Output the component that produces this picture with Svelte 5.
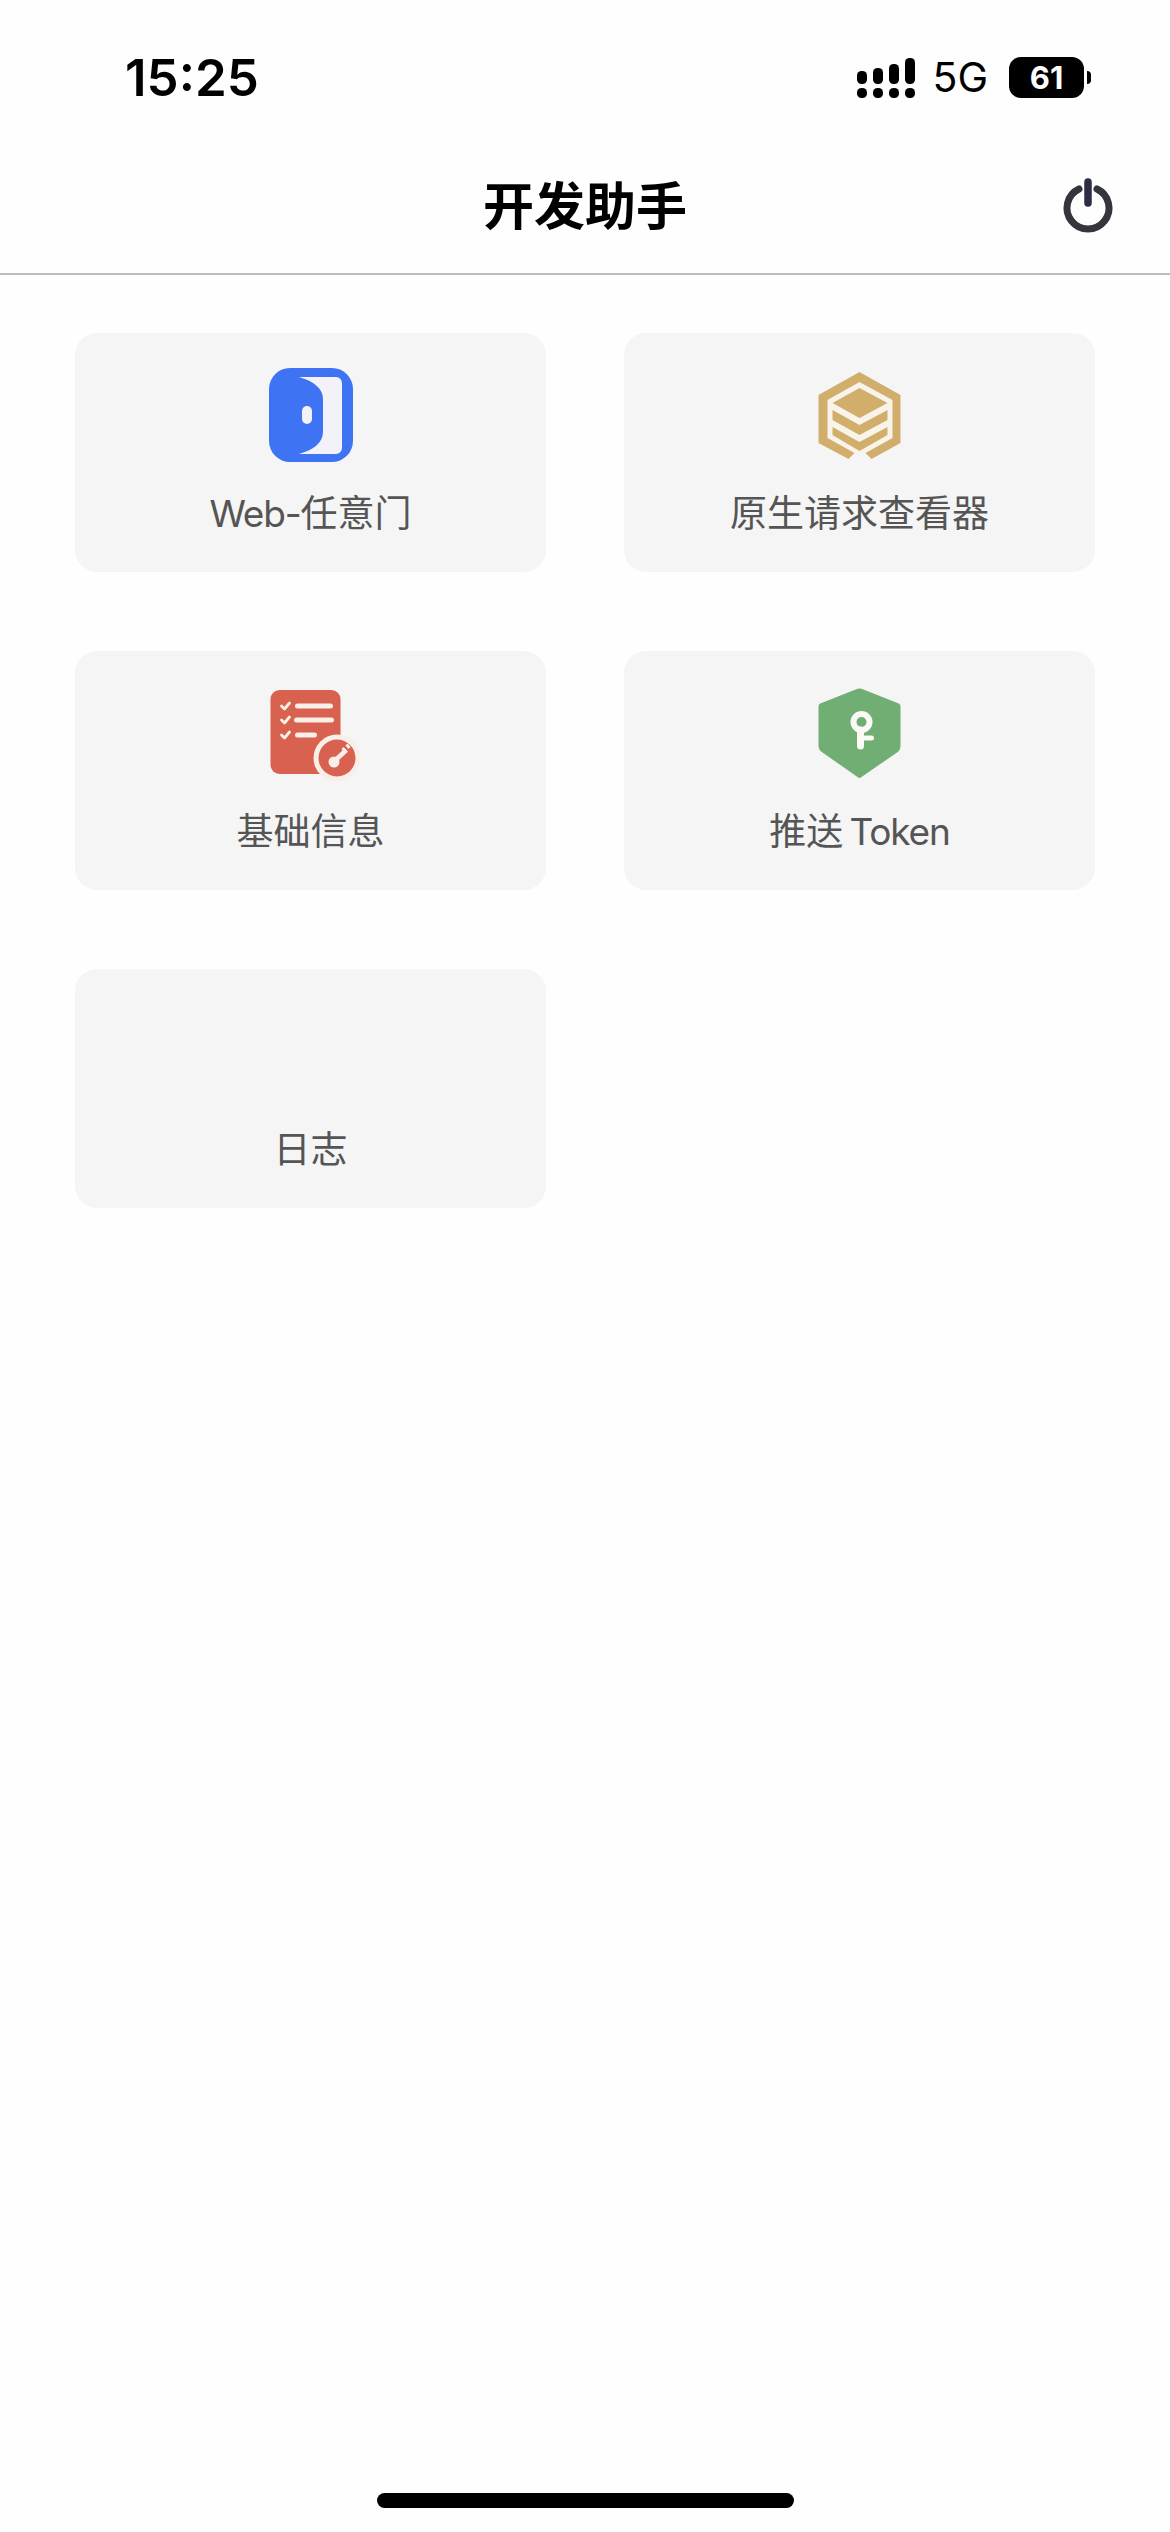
<script>
  const cards = [
    { latin: 'Web-', cjk: '任意门', icon: 'door' },
    { cjk: '原生请求查看器', icon: 'cube' },
    { cjk: '基础信息', icon: 'doc' },
    { cjk: '推送', latinAfter: ' Token', icon: 'shield' },
    { cjk: '日志', icon: 'none' }
  ];
</script>

<div class="page">
  <div class="status">
    <span class="time">15:25</span>
    <div class="status-right">
      <svg class="signal" width="58" height="40" viewBox="0 0 58 40" aria-hidden="true">
        <g fill="#000">
          <rect x="0" y="13" width="10" height="13" rx="4.5" />
          <rect x="16" y="10" width="10" height="16" rx="4.5" />
          <rect x="32" y="6" width="10" height="20" rx="4.5" />
          <rect x="48" y="0" width="10" height="26" rx="4.5" />
          <rect x="0" y="30" width="10" height="10" rx="4.5" />
          <rect x="16" y="30" width="10" height="10" rx="4.5" />
          <rect x="32" y="30" width="10" height="10" rx="4.5" />
          <rect x="48" y="30" width="10" height="10" rx="4.5" />
        </g>
      </svg>
      <span class="net">5G</span>
      <div class="battery"><span>61</span></div>
    </div>
  </div>

  <header class="header">
    <h1>开发助手</h1>
    <svg class="power" width="54" height="58" viewBox="0 0 54 58" aria-hidden="true">
      <path d="M18 12a21 21 0 1 0 18 0" fill="none" stroke="#34363b" stroke-width="7" stroke-linecap="round" />
      <path d="M27 5v21" stroke="#2a2c48" stroke-width="7.5" stroke-linecap="round" />
    </svg>
  </header>

  <main class="grid">
    {#each cards as card}
      <div class="card">
        <div class="icon">
          {#if card.icon === 'door'}
            <svg width="100" height="100" viewBox="260 363 100 100" aria-hidden="true">
              <rect x="268" y="368" width="84" height="94" rx="21" fill="#3e74f4" />
              <path d="M298 377H335a6 6 0 0 1 6 6V448a6 6 0 0 1-6 6H298C312 450 322 443 322 432V399C322 388 312 381 298 377Z" fill="#f3f2f8" />
              <rect x="301" y="406" width="10" height="18" rx="5" fill="#f3f2f8" />
            </svg>
          {:else if card.icon === 'cube'}
            <svg width="100" height="100" viewBox="809.5 363 100 100" aria-hidden="true">
              <path d="M859 382L892 400V438L859 456L827 438V400Z" fill="#f8f4ea" />
              <path d="M859 372L900 395V443L871 459L865 453L892 438V400L859 382L827 400V438L854 453L848 459L818 443V395Z" fill="#d2ae6d" />
              <path d="M859 388L887 403L859 418L832 403Z" fill="#d2ae6d" />
              <path d="M832 410L859 425L887 410V420L859 435L832 420Z" fill="#d2ae6d" />
              <path d="M832 427L859 442L887 427V435L859 451L832 435Z" fill="#d2ae6d" />
            </svg>
          {:else if card.icon === 'doc'}
            <svg width="100" height="100" viewBox="260.5 681 100 100" aria-hidden="true">
              <rect x="270" y="690" width="70" height="84" rx="9" fill="#d8614f" />
              <g stroke="#f9efe9" stroke-width="5" stroke-linecap="round" fill="none">
                <path d="M297 706H330M296 720H331M297 735H314" />
              </g>
              <g stroke="#f9efe9" stroke-width="2.8" stroke-linecap="round" stroke-linejoin="round" fill="none">
                <path d="M281 706l3 3 5-6M281 720l3 3 5-6M281 735l3 3 5-6" />
              </g>
              <circle cx="336.5" cy="758" r="23.5" fill="#f8efe9" />
              <circle cx="336.5" cy="758" r="18.5" fill="#d8614f" />
              <circle cx="333.5" cy="762" r="5.5" fill="#f9efe9" />
              <path d="M335 760L346 750" stroke="#f9efe9" stroke-width="4.5" fill="none" />
              <path d="M342 748l3 3.5M346 744.5l3 3.5" stroke="#f9efe9" stroke-width="3" fill="none" />
            </svg>
          {:else if card.icon === 'shield'}
            <svg width="100" height="100" viewBox="809.5 681 100 100" aria-hidden="true">
              <path d="M857 688.8a6 6 0 0 1 4 0L897 703a4 4 0 0 1 3 4V746a8 8 0 0 1-3.5 6.5L861 777a3 3 0 0 1-4 0L822 752.5A8 8 0 0 1 818 746V707a4 4 0 0 1 3-4Z" fill="#71ae73" />
              <circle cx="861" cy="722" r="8" fill="none" stroke="#fbfaf6" stroke-width="6" />
              <path d="M860 730V746" stroke="#fbfaf6" stroke-width="7" stroke-linecap="round" />
              <path d="M861 738H871" stroke="#fbfaf6" stroke-width="5" stroke-linecap="round" />
            </svg>
          {/if}
        </div>
        <span class="label">{#if card.latin}<span class="latin">{card.latin}</span>{/if}{card.cjk}{#if card.latinAfter}<span class="latin">{card.latinAfter}</span>{/if}</span>
      </div>
    {/each}
  </main>

  <div class="home"></div>
</div>

<style>
  :global(body) {
    margin: 0;
    background: #fefefe;
  }

  .page {
    min-height: 2532px;
    display: flex;
    flex-direction: column;
    font-family: Inter, "Noto Sans CJK SC", sans-serif;
    background: #fefefe;
  }

  .status {
    height: 140px;
    box-sizing: border-box;
    padding: 50px 86px 0 125px;
    display: flex;
    justify-content: space-between;
    align-items: flex-start;
    color: #000;
  }

  .time {
    font-size: 51px;
    font-weight: 600;
    line-height: 56px;
  }

  .status-right {
    display: flex;
    align-items: center;
    margin-top: 7px;
  }

  .signal {
    display: block;
  }

  .net {
    margin-left: 17px;
    font-size: 41px;
    line-height: 41px;
    font-weight: 400;
  }

  .battery {
    position: relative;
    width: 75px;
    height: 41px;
    margin-left: 21px;
    border-radius: 12px;
    background: #000;
    color: #fff;
    display: flex;
    align-items: center;
    justify-content: center;
    font-size: 31px;
    font-weight: 700;
  }

  .battery::after {
    content: "";
    position: absolute;
    right: -7px;
    top: 14px;
    width: 4px;
    height: 13px;
    border-radius: 0 7px 7px 0;
    background: #000;
  }

  .header {
    position: relative;
    height: 133px;
    border-bottom: 2px solid #bcbcbc;
    box-sizing: content-box;
    display: flex;
    align-items: center;
    justify-content: center;
  }

  .header h1 {
    margin: 0;
    font-size: 51px;
    font-weight: 700;
    color: #000;
    line-height: 1.2;
  }

  .power {
    position: absolute;
    right: 55px;
    top: 37px;
  }

  .grid {
    display: grid;
    grid-template-columns: 471px 471px;
    column-gap: 78px;
    row-gap: 79px;
    padding: 58px 75px 0;
  }

  .card {
    height: 239px;
    box-sizing: border-box;
    padding-top: 30px;
    border-radius: 22px;
    background: #f5f5f5;
    display: flex;
    flex-direction: column;
    align-items: center;
  }

  .icon {
    width: 100px;
    height: 100px;
  }

  .icon svg {
    display: block;
    overflow: visible;
  }

  .label {
    margin-top: 29px;
    font-size: 37px;
    line-height: 44px;
    color: #555;
    white-space: pre;
  }

  .latin {
    letter-spacing: -1.2px;
    word-spacing: -3px;
  }

  .home {
    width: 417px;
    height: 15px;
    margin: auto auto 24px;
    border-radius: 8px;
    background: #000;
  }
</style>
